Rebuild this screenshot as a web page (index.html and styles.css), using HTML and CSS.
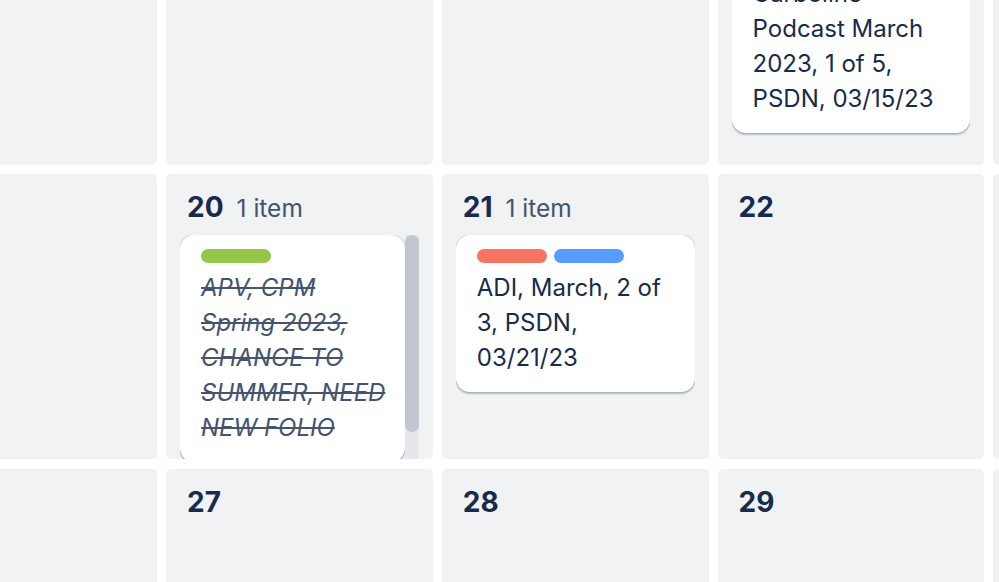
FILE: index.html
```html
<!doctype html>
<html>
  <head>
    <meta charset="utf-8">
    <meta name="viewport" content="width=device-width, initial-scale=1">
    <title>Calendar - March 2023</title>
    <link rel="stylesheet" href="styles.css">
  </head>
  <body>
    <div class="calendar">
      <!-- week of the 12th -->
      <div class="day">
        <div class="day-head"><span class="day-num">12</span></div>
        <div class="card-list"></div>
      </div>
      <div class="day">
        <div class="day-head"><span class="day-num">13</span></div>
        <div class="card-list"></div>
      </div>
      <div class="day">
        <div class="day-head"><span class="day-num">14</span></div>
        <div class="card-list"></div>
      </div>
      <div class="day">
        <div class="day-head"><span class="day-num">15</span><span class="day-count">1 item</span></div>
        <div class="card-list">
          <div class="cards">
            <div class="card">
              <div class="labels"><span class="label purple"></span></div>
              <div class="card-title">Carboline Podcast March 2023, 1 of 5, PSDN, 03/15/23</div>
            </div>
          </div>
        </div>
      </div>
      <div class="day">
        <div class="day-head"><span class="day-num">16</span></div>
        <div class="card-list"></div>
      </div>

      <!-- week of the 19th -->
      <div class="day">
        <div class="day-head"><span class="day-num">19</span></div>
        <div class="card-list"></div>
      </div>
      <div class="day">
        <div class="day-head"><span class="day-num">20</span><span class="day-count">1 item</span></div>
        <div class="card-list">
          <div class="cards">
            <div class="card done">
              <div class="labels"><span class="label green"></span></div>
              <div class="card-title">APV, CPM Spring 2023, CHANGE TO SUMMER, NEED NEW FOLIO</div>
            </div>
          </div>
          <div class="scrollbar"><div class="thumb"></div></div>
        </div>
      </div>
      <div class="day">
        <div class="day-head"><span class="day-num">21</span><span class="day-count">1 item</span></div>
        <div class="card-list">
          <div class="cards">
            <div class="card">
              <div class="labels"><span class="label red"></span><span class="label blue"></span></div>
              <div class="card-title">ADI, March, 2 of 3, PSDN, 03/21/23</div>
            </div>
          </div>
        </div>
      </div>
      <div class="day">
        <div class="day-head"><span class="day-num">22</span></div>
        <div class="card-list"></div>
      </div>
      <div class="day">
        <div class="day-head"><span class="day-num">23</span></div>
        <div class="card-list"></div>
      </div>

      <!-- week of the 26th -->
      <div class="day">
        <div class="day-head"><span class="day-num">26</span></div>
        <div class="card-list"></div>
      </div>
      <div class="day">
        <div class="day-head"><span class="day-num">27</span></div>
        <div class="card-list"></div>
      </div>
      <div class="day">
        <div class="day-head"><span class="day-num">28</span></div>
        <div class="card-list"></div>
      </div>
      <div class="day">
        <div class="day-head"><span class="day-num">29</span></div>
        <div class="card-list"></div>
      </div>
      <div class="day">
        <div class="day-head"><span class="day-num">30</span></div>
        <div class="card-list"></div>
      </div>
    </div>
  </body>
</html>
```

FILE: styles.css
```css
html,
body {
  margin: 0;
  height: 100%;
  overflow: hidden;
  background: #fff;
}
body {
  font-family: Inter, "Liberation Sans", sans-serif;
  color: #172b4d;
}
/* page is scrolled part way into the month */
.calendar {
  display: grid;
  grid-template-columns: repeat(5, 266.8px);
  grid-auto-rows: 285px;
  column-gap: 9px;
  row-gap: 9.5px;
  margin: -120.5px 0 0 -109.8px;
}
.day {
  background: #f1f2f4;
  border-radius: 5px;
  display: flex;
  flex-direction: column;
  min-height: 0;
  overflow: hidden;
}
.day-head {
  display: flex;
  align-items: baseline;
  gap: 13px;
  padding: 16px 21px 0;
  margin-bottom: 9px;
  line-height: 35px;
}
.day-num {
  font-size: 28px;
  font-weight: 700;
  color: #172b4d;
}
.day-count {
  font-size: 24.5px;
  color: #44546f;
}
.card-list {
  flex: 1;
  min-height: 0;
  margin: 0 14px;
  display: flex;
}
.cards {
  flex: 1;
  min-width: 0;
  overflow: hidden;
}
.scrollbar {
  flex: 0 0 14px;
  background: #e6e7eb;
}
.thumb {
  height: 197px;
  background: #c1c7d0;
  border-radius: 7px;
}
.card {
  background: #fff;
  border-radius: 14px;
  padding: 14px 15px 17px 21px;
  margin-bottom: 28px;
  box-shadow: 0 1.75px 1.75px rgba(9, 30, 66, 0.25), 0 0 1.75px rgba(9, 30, 66, 0.31);
}
.labels {
  display: flex;
  gap: 7px;
  margin-bottom: 7px;
}
.label {
  width: 70px;
  height: 14px;
  border-radius: 7px;
}
.label.green { background: #94c748; }
.label.red { background: #f87462; }
.label.blue { background: #579dff; }
.label.purple { background: #9f8fef; }
.card-title {
  font-size: 24px;
  line-height: 35px;
  color: #172b4d;
}
.card.done .card-title {
  font-style: italic;
  text-decoration: line-through;
  color: #44546f;
}
```
